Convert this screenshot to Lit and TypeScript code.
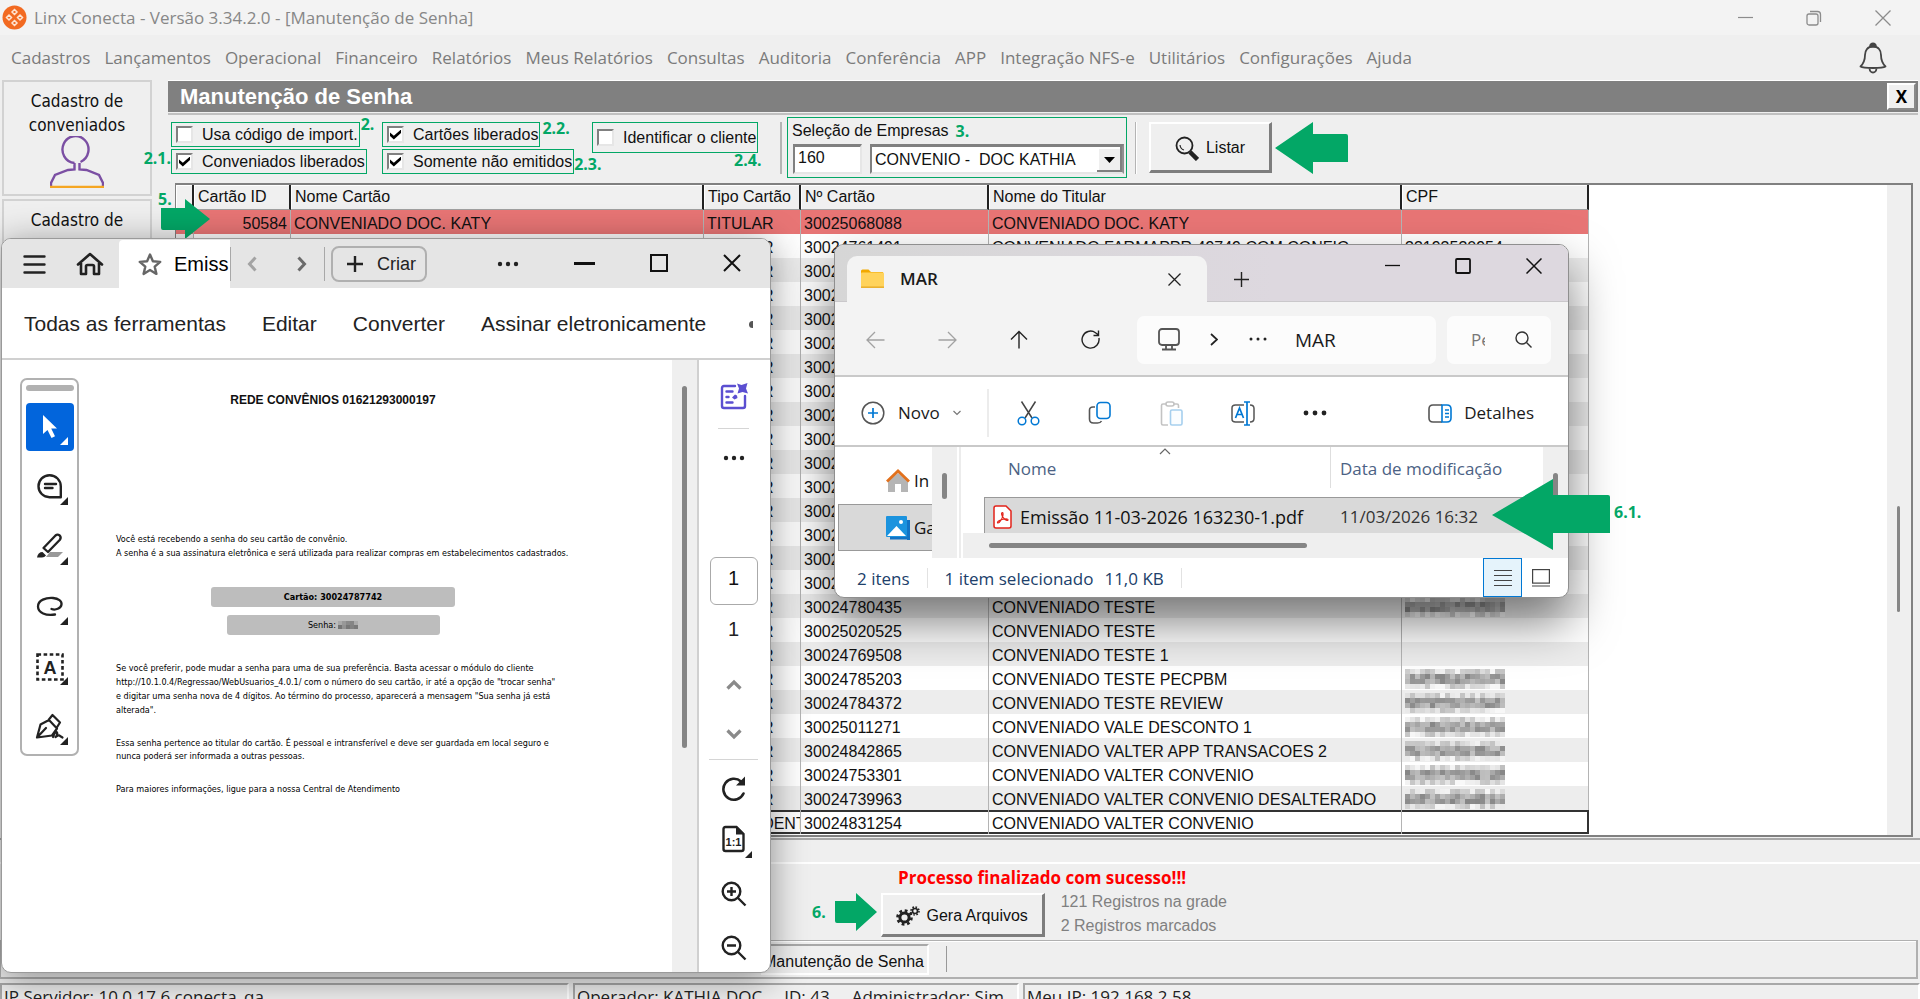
import { LitElement, html, css, svg, nothing } from "lit";
import { customElement } from "lit/decorators.js";

interface CardRow {
  id?: string;
  name?: string;
  kind: string;
  card: string;
  holder?: string;
  cpf?: string;
  masked?: boolean;
}

const hidden = (n: number): CardRow[] =>
  Array.from({ length: n }, () => ({ kind: "TITULAR", card: "30024" }));

const ROWS: CardRow[] = [
  { id: "50584", name: "CONVENIADO DOC. KATY", kind: "TITULAR", card: "30025068088", holder: "CONVENIADO DOC. KATY" },
  { kind: "TITULAR", card: "30024761491", holder: "CONVENIADO FARMAPPR 49749 COM CONFIG.", cpf: "33193530954" },
  ...hidden(14),
  { kind: "TITULAR", card: "30024780435", holder: "CONVENIADO TESTE", masked: true },
  { kind: "TITULAR", card: "30025020525", holder: "CONVENIADO TESTE" },
  { kind: "TITULAR", card: "30024769508", holder: "CONVENIADO TESTE 1" },
  { kind: "TITULAR", card: "30024785203", holder: "CONVENIADO TESTE PECPBM", masked: true },
  { kind: "TITULAR", card: "30024784372", holder: "CONVENIADO TESTE REVIEW", masked: true },
  { kind: "TITULAR", card: "30025011271", holder: "CONVENIADO VALE DESCONTO 1", masked: true },
  { kind: "TITULAR", card: "30024842865", holder: "CONVENIADO VALTER APP TRANSACOES 2", masked: true },
  { kind: "TITULAR", card: "30024753301", holder: "CONVENIADO VALTER CONVENIO", masked: true },
  { kind: "TITULAR", card: "30024739963", holder: "CONVENIADO VALTER CONVENIO DESALTERADO", masked: true },
  { kind: "DEPENDENTE", card: "30024831254", holder: "CONVENIADO VALTER CONVENIO" },
];

const MENU = [
  "Cadastros", "Lançamentos", "Operacional", "Financeiro", "Relatórios", "Meus Relatórios", "Consultas",
  "Auditoria", "Conferência", "APP", "Integração NFS-e", "Utilitários", "Configurações", "Ajuda",
];

/* Pixelated block that covers private numbers */
const mosaic = (seed: number, cols: number, rows: number, size: number, edge = 205) => {
  const cells = [];
  let s = seed * 7919 + 17;
  for (let y = 0; y < rows; y++) {
    for (let x = 0; x < cols; x++) {
      s = (s * 1103515245 + 12345) % 2147483648;
      const tone = y === 0 || y === rows - 1 ? edge : 150;
      const g = tone + Math.floor((s / 2147483648) * 60) - 15;
      cells.push(svg`<rect x=${x * size} y=${y * size} width=${size} height=${size} fill="rgb(${g},${g},${g})"/>`);
    }
  }
  return html`<svg width=${cols * size} height=${rows * size} shape-rendering="crispEdges" aria-hidden="true">${cells}</svg>`;
};

const base = css`
  *, *::before, *::after { box-sizing: border-box; }
  svg { display: block; flex: none; }
  button, input, select { font: inherit; color: inherit; margin: 0; padding: 0; border: 0; background: none; border-radius: 0; }
  button { display: flex; align-items: center; flex: none; cursor: pointer; }
  p, h1, h2 { margin: 0; font-size: inherit; }
`;

@customElement("pdf-window")
export class PdfWindow extends LitElement {
  static styles = [base, css`
    :host {
      display: flex; flex-direction: column; box-sizing: border-box; overflow: hidden;
      border: 1px solid #9a9a9a; border-radius: 10px; background: #fff; color: #222;
      box-shadow: 0 6px 36px rgba(0, 0, 0, .42);
      font-family: "Liberation Sans", Arial, sans-serif;
    }
    .head { display: flex; align-items: center; height: 49px; flex: none; background: #e5e5e5; padding-left: 20px; }
    .home { margin-left: 29px; }
    .tab { display: flex; align-items: center; gap: 11px; align-self: flex-end; height: 48px; width: 111px; margin-left: 15px; padding-left: 18px; background: #fff; overflow: hidden; border-radius: 4px 0 0 0; font-size: 20px; color: #000; }
    .sep { width: 1px; height: 34px; background: #a8a8a8; }
    .prev { margin-left: 16px; }
    .next { margin-left: 40px; margin-right: 17px; }
    .create { height: 36px; width: 96px; margin-left: 6px; padding-left: 14px; gap: 14px; border: 2px solid #b0b0b0; border-radius: 8px; font-size: 18px; }
    .dots { margin-left: 70px; }
    .win { margin-left: 55px; }
    .tools { display: flex; align-items: center; gap: 36px; height: 72px; flex: none; padding: 2px 0 0 22px; border-bottom: 2px solid #d0d0d0; font-size: 21px; white-space: nowrap; }
    .more { width: 4px; height: 7px; margin-left: 7px; border-radius: 4px 0 0 4px; background: #555; }
    .body { display: flex; flex: 1; min-height: 0; }
    .rail { display: flex; flex-direction: column; gap: 12px; align-self: flex-start; width: 59px; margin: 18px 0 0 18px; padding: 5px 3px 3px 3px; border: 2px solid #b1b1b1; border-radius: 7px; align-items: center; }
    .grip { width: 48px; height: 6px; border-radius: 3px; background: #b1b1b1; }
    .on { background: #0265dc; color: #fff; border-radius: 4px; }
    .page { width: 434px; margin-left: 37px; padding-top: 32px; white-space: nowrap; font: 9px/14px "DejaVu Sans Condensed", "Noto Sans", sans-serif; color: #000; }
    .page h1 { font: bold 12px/16px "Liberation Sans", Arial, sans-serif; text-align: center; color: #111; }
    .intro { padding-top: 124px; }
    .pill { display: flex; align-items: center; justify-content: center; gap: 2px; height: 20px; width: 244px; margin: 27px auto 0; border-radius: 3px; background: #bdbdbd; font-weight: bold; }
    .pill.small { width: 213px; margin-top: 8px; font-weight: normal; }
    .para { padding-top: 26px; }
    .para.two { padding-top: 20px; line-height: 13px; }
    .grow { flex: 1; }
    .track { width: 25px; background: #efefef; padding: 26px 10px 0; }
    .thumb { width: 5px; height: 362px; border-radius: 3px; background: #858585; }
    .side { display: flex; flex-direction: column; align-items: center; width: 73px; border-left: 2px solid #d0d0d0; padding: 23px 2px 0 0; color: #222; }
    .line { height: 1px; width: 49px; background: #d5d5d5; }
    .line.short { width: 31px; margin: 18px 0 26px; }
    .pageno { width: 48px; height: 48px; margin-top: 96px; border: 1px solid #aaa; border-radius: 6px; text-align: center; font-size: 20px; padding-bottom: 6px; color: #111; }
    .total { font-size: 20px; line-height: 24px; margin: 12px 0 38px; }
    .down { margin: 39px 0 19px; }
    .rot { margin: 14px 0 22px; }
    .z { margin-top: 23px; }
  `];

  private corner = svg`<path d="M42 34v8h-8z" fill="currentColor"/>`;

  render() {
    const c = this.corner;
    return html`
      <div class="head">
        <button aria-label="Menu"><svg width="25" height="24" stroke="#222" stroke-width="2.4" stroke-linecap="round"><path d="M2.500 4.500h20M2.500 12.500h20M2.500 20.500h20"/></svg></button>
        <button class="home" aria-label="Início"><svg width="28" height="26" fill="none" stroke="#222" stroke-width="2.6" stroke-linejoin="round" stroke-linecap="round"><path d="M2 13.500 14 3l12 10.500M5 12v11h5v-7.500q0-1.500 1.500-1.500h5q1.500 0 1.500 1.500V23h5V12"/></svg></button>
        <div class="tab"><svg width="26" height="26" fill="none" stroke="#666" stroke-width="2.4" stroke-linejoin="round"><path d="M13 3.500l2.900 6.800 7.300.6-5.500 4.800 1.700 7.200-6.400-3.900-6.400 3.900 1.700-7.200-5.500-4.800 7.300-.6z"/></svg><span>Emiss</span></div>
        <span class="sep"></span>
        <button class="prev" aria-label="Anterior"><svg width="10" height="16" fill="none" stroke="#a3a3a3" stroke-width="3"><path d="M8.500 1.500 2.500 8l6 6.500"/></svg></button>
        <button class="next" aria-label="Próximo"><svg width="10" height="16" fill="none" stroke="#6b6b6b" stroke-width="3"><path d="M1.500 1.500 7.500 8l-6 6.500"/></svg></button>
        <span class="sep"></span>
        <button class="create"><svg width="16" height="16" stroke="#222" stroke-width="2.400"><path d="M8 0v16M0 8h16"/></svg><span>Criar</span></button>
        <button class="dots" aria-label="Mais"><svg width="22" height="6" fill="#222"><circle cx="3" cy="3" r="2.200"/><circle cx="11" cy="3" r="2.200"/><circle cx="19" cy="3" r="2.200"/></svg></button>
        <button class="win" aria-label="Minimizar"><svg width="21" height="18"><path d="M0 8.500h21" stroke="#111" stroke-width="3"/></svg></button>
        <button class="win" aria-label="Maximizar"><svg width="18" height="20"><rect x="1" y="1" width="16" height="16" fill="none" stroke="#111" stroke-width="2"/></svg></button>
        <button class="win" aria-label="Fechar"><svg width="18" height="20"><path d="M1 1l16 16M17 1 1 17" stroke="#111" stroke-width="2"/></svg></button>
      </div>
      <div class="tools">
        <button>Todas as ferramentas</button><button>Editar</button><button>Converter</button><button>Assinar eletronicamente</button><span class="more"></span>
      </div>
      <div class="body">
        <div class="rail">
          <span class="grip"></span>
          <button class="on" aria-label="Selecionar"><svg width="48" height="48"><path d="M17 12v19l4.500-4 4 8 3.500-1.700-3.800-7.800H31z" fill="#fff"/>${c}</svg></button>
          <button aria-label="Comentar"><svg width="48" height="48" fill="none" stroke="#222" stroke-width="2.400" stroke-linecap="round"><path d="M23.500 12.200a11 11 0 1 0 0 22H34.800V23.500A11.200 11.200 0 0 0 23.500 12.200z" stroke-linejoin="round"/><path d="M19 21h11M19 25h7.500"/><path d="M42 34v8h-8z" fill="#222" stroke="none"/></svg></button>
          <button aria-label="Realçar"><svg width="48" height="48"><path d="M24 29h13l-5 5H20z" fill="#999"/><path d="M11 34.500q1-5.500 5.500-5.500l3.500 3.500q-1.500 2-4 2z" fill="#222"/><path d="M17.500 25 29.500 12.500q2-1.700 4.200 0 1.800 2 .2 4.200L22 29z" fill="none" stroke="#222" stroke-width="2.300" stroke-linejoin="round"/>${c}</svg></button>
          <button aria-label="Desenhar"><svg width="48" height="48" fill="none" stroke="#222" stroke-width="2.300" stroke-linecap="round"><path d="M29 31.500c-9 1.500-17-1.500-17-8C12 17 20 14.500 27 15c5.500.5 9 3 8.500 6.500-.6 4-6 6-10 4.500"/><path d="M42 34v8h-8z" fill="#222" stroke="none"/></svg></button>
          <button aria-label="Caixa de texto"><svg width="48" height="48"><rect x="11.500" y="11.500" width="25" height="25" fill="none" stroke="#222" stroke-width="2.600" stroke-dasharray="3.600 2.500"/><text x="24" y="30.500" text-anchor="middle" font-size="18" font-weight="bold" fill="#222">A</text>${c}</svg></button>
          <button aria-label="Assinar"><svg width="48" height="48" fill="none" stroke="#222" stroke-width="2.200" stroke-linejoin="round" stroke-linecap="round"><path d="M11 34.500l3.500-13 8.500-4.500 8 8.500-5 7zM22.500 17l4-5 7.500 7.500-3.500 5.500M11.500 34l8.500-9"/><path d="M27 34q3-7 4-4.500t-1.500 4.500q3.500-2.500 4.500-1l2.500 1.500"/><path d="M42 34v8h-8z" fill="#222" stroke="none"/></svg></button>
        </div>
        <div class="page">
          <h1>REDE CONVÊNIOS 01621293000197</h1>
          <p class="intro">Você está recebendo a senha do seu cartão de convênio.<br>A senha é a sua assinatura eletrônica e será utilizada para realizar compras em estabelecimentos cadastrados.</p>
          <div class="pill">Cartão: 30024787742</div>
          <div class="pill small">Senha: ${mosaic(4, 5, 2, 4, 130)}</div>
          <p class="para">Se você preferir, pode mudar a senha para uma de sua preferência. Basta acessar o módulo do cliente<br>http://10.1.0.4/Regressao/WebUsuarios_4.0.1/ com o número do seu cartão, ir até a opção de "trocar senha"<br>e digitar uma senha nova de 4 dígitos. Ao término do processo, aparecerá a mensagem "Sua senha já está<br>alterada".</p>
          <p class="para two">Essa senha pertence ao titular do cartão. É pessoal e intransferível e deve ser guardada em local seguro e<br>nunca poderá ser informada a outras pessoas.</p>
          <p class="para two">Para maiores informações, ligue para a nossa Central de Atendimento</p>
        </div>
        <span class="grow"></span>
        <div class="track"><div class="thumb"></div></div>
        <div class="side">
          <button aria-label="Assistente"><svg width="28" height="27" fill="none" stroke="#5b4fd1" stroke-width="2.400" stroke-linecap="round"><path d="M15 3H4Q2 3 2 5v18q0 2 2 2h19q2 0 2-2V13" /><path d="M6.500 8.500h6M6.500 14h2M6.500 19.500h6"/><path d="M17 .5l4.500 1.500L27.500 0 26 5.500l2 5-5.500-1.500-5 1.500 1.500-5zM15 11.500l2 1 .5 2.500-3 1.500-2.500-2z" fill="#5b4fd1" stroke="none"/></svg></button>
          <span class="line short"></span>
          <button aria-label="Mais"><svg width="22" height="6" fill="#222"><circle cx="3" cy="3" r="2.200"/><circle cx="11" cy="3" r="2.200"/><circle cx="19" cy="3" r="2.200"/></svg></button>
          <input class="pageno" aria-label="Página" value="1">
          <span class="total">1</span>
          <button aria-label="Página anterior"><svg width="16" height="11" fill="none" stroke="#8a8a8a" stroke-width="3.200"><path d="M1.500 9.500 8 3l6.500 6.500"/></svg></button>
          <button class="down" aria-label="Próxima página"><svg width="16" height="11" fill="none" stroke="#8a8a8a" stroke-width="3.200"><path d="M1.500 1.500 8 8l6.500-6.500"/></svg></button>
          <span class="line"></span>
          <button class="rot" aria-label="Girar"><svg width="26" height="28" fill="none" stroke="#222" stroke-width="2.600"><path d="M22.500 19.500A10.500 10.500 0 1 1 20 7.500" stroke-linecap="round"/><path d="M24 2.500v9h-9z" fill="#222" stroke="none"/></svg></button>
          <button aria-label="Tamanho real"><svg width="36" height="34"><path d="M9.500 3h11l7 7v15q0 2-2 2h-16q-2 0-2-2V5q0-2 2-2z" fill="none" stroke="#222" stroke-width="2.400"/><path d="M20 3v7.500h7.500z" fill="#222"/><text x="17.500" y="22" text-anchor="middle" font-size="11" font-weight="bold" fill="#222">1:1</text><path d="M36 27v7h-7z" fill="#222"/></svg></button>
          <button class="z" aria-label="Ampliar"><svg width="26" height="26" fill="none" stroke="#222" stroke-width="2.400"><circle cx="10.500" cy="10.500" r="8.800"/><path d="M17 17l7.500 7.500M6 10.500h9M10.500 6v9"/></svg></button>
          <button class="z" aria-label="Reduzir"><svg width="26" height="32" fill="none" stroke="#222" stroke-width="2.400"><circle cx="10.500" cy="15.500" r="8.800"/><path d="M17 22l7.500 7.500M6 15.500h9"/></svg></button>
        </div>
      </div>`;
  }
}

@customElement("explorer-window")
export class ExplorerWindow extends LitElement {
  static styles = [base, css`
    :host {
      display: flex; flex-direction: column; box-sizing: border-box; overflow: hidden;
      border: 1px solid #8f8f8f; border-radius: 10px; background: #fff; color: #1b1b1b;
      box-shadow: 0 24px 48px rgba(0, 0, 0, .5);
      font: 17px/24px "Open Sans", "Noto Sans", sans-serif;
    }
    .strip { display: flex; height: 57px; flex: none; padding: 11px 0 0 12px; background: linear-gradient(#cac8cb, #cac8cb) bottom / 100% 1px no-repeat, linear-gradient(90deg, #d6d6d6, #ddd8df 60%); }
    .tab { display: flex; align-items: center; width: 360px; padding: 0 26px 0 14px; border-radius: 10px 10px 0 0; background: #f3f3f3; font-weight: 600; }
    .tab span { flex: 1; padding-left: 16px; }
    .plus { margin: 0 0 0 27px; height: 46px; }
    .wins { display: flex; gap: 55px; margin-left: auto; padding-right: 26px; height: 20px; align-items: center; }
    .nav { display: flex; align-items: center; height: 75px; flex: none; padding: 2px 17px 0 31px; background: #f3f3f3; border-bottom: 2px solid #c9c9c9; }
    .arrows { display: flex; gap: 53px; }
    .addr { display: flex; align-items: center; flex: 1; height: 48px; margin: 0 11px 0 37px; padding-left: 21px; border-radius: 7px; background: #fcfcfc; font-size: 19px; }
    .addr .gt { margin: 0 31px 0 30px; }
    .addr span { padding-left: 28px; }
    .search { display: flex; align-items: center; width: 104px; height: 48px; padding-left: 24px; gap: 30px; border-radius: 7px; background: #fcfcfc; }
    .search input { width: 14px; color: #777; overflow: hidden; }
    .cmds { display: flex; align-items: center; height: 70px; flex: none; padding: 4px 34px 0 26px; border-bottom: 2px solid #c9c9c9; }
    .new { gap: 13px; }
    .vsep { width: 2px; height: 48px; margin: 0 28px 0 26px; background: #ececec; }
    .icons { display: flex; align-items: center; gap: 48px; }
    .det { margin-left: auto; gap: 12px; }
    .content { display: flex; height: 111px; flex: none; }
    .tree { width: 97px; padding: 10px 0 0 3px; }
    .node { display: flex; align-items: center; gap: 4px; width: 94px; height: 47px; padding-left: 47px; overflow: hidden; border: 1px solid transparent; border-right: 0; color: #111; }
    .node.sel { background: #d9d9d9; border-color: #999; }
    .vs { width: 25px; background: #efefef; padding: 26px 10px 0; }
    .vt { width: 5px; height: 26px; border-radius: 3px; background: #858585; }
    .div { width: 2px; margin: 0 2px; background: #ececec; }
    .list { position: relative; display: flex; flex-direction: column; flex: 1; }
    table { width: 559px; margin-left: 21px; border-collapse: separate; border-spacing: 0; table-layout: fixed; flex: 1; }
    th, td { padding: 0; text-align: left; white-space: nowrap; font-weight: 400; }
    .name { width: 346px; }
    th { height: 50px; padding: 0 0 6px 24px; color: #4c6284; }
    th + th { padding-left: 10px; background: linear-gradient(#dedede, #dedede) 0 0 / 1px 41px no-repeat; }
    td { height: 36px; padding-top: 3px; background: #d9d9d9; border-top: 1px solid #999; color: #111; }
    td:first-child { border-left: 1px solid #999; }
    td + td { padding-left: 10px; color: #333; }
    .file { display: flex; align-items: center; gap: 8px; padding-left: 8px; font-size: 18px; }
    .caret { position: absolute; left: 196px; top: 0; }
    .hs { height: 25px; background: #efefef; padding: 10px 26px 0; }
    .ht { width: 318px; height: 5px; border-radius: 3px; background: #858585; }
    .status { display: flex; align-items: center; flex: 1; padding: 0 18px 0 22px; color: #20406a; }
    .status span { padding-top: 2px; }
    .status .ssep { width: 1px; height: 20px; margin: 0 17px; background: #e2e2e2; }
    .size { margin-left: 11px; }
    .view { justify-content: center; width: 39px; height: 39px; }
    .view.act { margin-left: auto; border: 1px solid #0078d4; background: #e5f3fb; }
    .view + .view { width: 18px; margin-left: 10px; }
  `];

  render() {
    return html`
      <div class="strip">
        <div class="tab">
          <svg width="23" height="20"><path d="M0 2q0-1.500 1.500-1.500h6L10 3h12v4H0z" fill="#f2a900"/><rect y="3.500" width="23" height="15" rx="1" fill="#ffd35c"/><path d="M0 18.200h23" stroke="#e9ae2a" stroke-width="1.500"/></svg>
          <span>MAR</span>
          <button aria-label="Fechar guia"><svg width="13" height="13" stroke="#222" stroke-width="1.300"><path d="M.5.5l12 12M12.500.5l-12 12"/></svg></button>
        </div>
        <button class="plus" aria-label="Nova guia"><svg width="15" height="15" stroke="#222" stroke-width="1.400"><path d="M7.500 0v15M0 7.500h15"/></svg></button>
        <div class="wins">
          <button aria-label="Minimizar"><svg width="15" height="16" stroke="#111" stroke-width="1.300"><path d="M0 7.500h15"/></svg></button>
          <button aria-label="Maximizar"><svg width="16" height="16" fill="none" stroke="#111" stroke-width="1.800"><rect x="1" y="1" width="14" height="14" rx="1"/></svg></button>
          <button aria-label="Fechar"><svg width="16" height="16" stroke="#111" stroke-width="1.500"><path d="M.5.5l15 15M15.500.5l-15 15"/></svg></button>
        </div>
      </div>
      <div class="nav">
        <div class="arrows">
          <button aria-label="Voltar"><svg width="19" height="18" fill="none" stroke="#a2a2a2" stroke-width="1.300"><path d="M18.500 9H1.500M9 1 1 9l8 8"/></svg></button>
          <button aria-label="Avançar"><svg width="19" height="18" fill="none" stroke="#a2a2a2" stroke-width="1.300"><path d="M.5 9h17M10 1l8 8-8 8"/></svg></button>
          <button aria-label="Acima"><svg width="18" height="19" fill="none" stroke="#222" stroke-width="1.400"><path d="M9 18.500v-17M1 9.500l8-8 8 8"/></svg></button>
          <button aria-label="Atualizar"><svg width="19" height="19" fill="none" stroke="#222" stroke-width="1.400"><path d="M17.900 8A8.500 8.500 0 1 1 14.500 2.700L17.500 5M17.500.5V5.500H12.500"/></svg></button>
        </div>
        <div class="addr">
          <svg width="22" height="23" fill="none" stroke="#555" stroke-width="1.800"><rect x="1" y="1" width="20" height="16" rx="3"/><path d="M8 17v4M14 17v4M4 21.500h14"/></svg>
          <svg class="gt" width="8" height="13" fill="none" stroke="#222" stroke-width="1.700"><path d="M1 1l6 5.500L1 12"/></svg>
          <svg width="18" height="6" fill="#222"><circle cx="2" cy="2" r="1.500"/><circle cx="9" cy="2" r="1.500"/><circle cx="16" cy="2" r="1.500"/></svg>
          <span>MAR</span>
        </div>
        <label class="search"><input aria-label="Pesquisar" value="Pe"><svg width="17" height="17" fill="none" stroke="#333" stroke-width="1.400"><circle cx="7" cy="7" r="6"/><path d="M11.500 11.500l5 5"/></svg></label>
      </div>
      <div class="cmds">
        <button class="new"><svg width="24" height="24" fill="none" stroke-width="1.500"><circle cx="12" cy="12" r="10.800" stroke="#555"/><path d="M12 7v10M7 12h10" stroke="#0078d4" stroke-width="1.700"/></svg><span>Novo</span><svg width="8" height="6" fill="none" stroke="#777" stroke-width="1.200"><path d="M.5 1 4 4.500 7.500 1"/></svg></button>
        <span class="vsep"></span>
        <div class="icons">
          <button aria-label="Recortar"><svg width="23" height="25" fill="none" stroke="#444" stroke-width="1.500"><path d="M4.500.5 15 17M18.500.5 8 17"/><circle cx="5" cy="20" r="3.800" stroke="#0078d4"/><circle cx="18" cy="20" r="3.800" stroke="#0078d4"/></svg></button>
          <button aria-label="Copiar"><svg width="24" height="24" fill="none" stroke-width="1.600"><path d="M7 6H5Q1.500 6 1.500 9v9q0 4 4 4h4q3 0 4-2" stroke="#555"/><rect x="9" y="1.500" width="13" height="16" rx="3.500" stroke="#0078d4" fill="#fafdff"/></svg></button>
          <button aria-label="Colar"><svg width="23" height="25" fill="none" stroke="#c3c3c3" stroke-width="1.600"><path d="M6 3H3Q1.500 3 1.500 4.500v18q0 1.500 1.500 1.500h5M14 3h3q1.500 0 1.500 1.500V7"/><rect x="6" y="1" width="8" height="4" rx="2"/><rect x="10.500" y="9" width="11.500" height="15" rx="1.500" stroke="#a6cfee" fill="#fafdff"/></svg></button>
          <button aria-label="Renomear"><svg width="24" height="25" fill="none" stroke="#555" stroke-width="1.500"><path d="M13 4H4.500Q1 4 1 7v11q0 3 3.500 3H13M19 4q4 0 4 3.500v10q0 3.500-4 3.500"/><path d="M13 1h6M16 1v23M13 24h6M4.500 17 8.500 7l4 10M6 13.500h5.500" stroke="#0078d4" stroke-width="1.700"/></svg></button>
          <button aria-label="Mais"><svg width="24" height="6" fill="#222"><circle cx="3" cy="3" r="2.400"/><circle cx="12" cy="3" r="2.400"/><circle cx="21" cy="3" r="2.400"/></svg></button>
        </div>
        <button class="det"><svg width="24" height="19" fill="none" stroke-width="1.600"><path d="M14 1H5Q1 1 1 5v9q0 4 4 4h9" stroke="#555"/><path d="M14 1h5q4 0 4 4v9q0 4-4 4h-5zM17 6h4M17 9.500h4M17 13h4" stroke="#0078d4"/></svg><span>Detalhes</span></button>
      </div>
      <div class="content">
        <div class="tree">
          <div class="node"><svg width="24" height="24"><path d="M2 12 12 4l10 8v11h-7v-8H9v8H2z" fill="#b5b5b5"/><path d="M1 12.500 12 2l11 10.500" fill="none" stroke="#e2711d" stroke-width="2.800"/></svg><span>In</span></div>
          <div class="node sel"><svg width="24" height="24"><path d="M4 4h20v20H4z" fill="#1273c4"/><rect width="21" height="21" rx="1" fill="#1b93de"/><path d="M21 24H3" stroke="#d9d9d9"/><path d="M1 20 10.500 10 20 20z" fill="#fff"/><circle cx="15" cy="6" r="2" fill="#fff"/></svg><span>Ga</span></div>
        </div>
        <div class="vs"><div class="vt"></div></div>
        <span class="div"></span>
        <div class="list">
          <table>
            <thead><tr><th class="name">Nome</th><th>Data de modificação</th></tr></thead>
            <tbody><tr>
              <td><div class="file"><svg width="19" height="24" fill="#fff" stroke="#e2231a" stroke-width="1.500"><path d="M3 1h10l5 5v15q0 2-2 2H3q-2 0-2-2V3q0-2 2-2z"/><path d="M9.500 7.500c-1.800 0-.6 3.500 1 5.500 1.700 1.800 4.500 3.500 4.500 1.800 0-1.500-5.500-.8-8.500.7-2 1-2.500 2.300-1.500 2.500 1.700.2 4.500-5 4.900-7.500.2-1.500.2-3-.4-3z" fill="none" stroke-width="1.200"/></svg><span>Emissão 11-03-2026 163230-1.pdf</span></div></td>
              <td>11/03/2026 16:32</td>
            </tr></tbody>
          </table>
          <svg class="caret" width="12" height="9" fill="none" stroke="#666" stroke-width="1.200"><path d="M1 7l5-5 5 5"/></svg>
          <div class="hs"><div class="ht"></div></div>
        </div>
        <div class="vs"><div class="vt"></div></div>
      </div>
      <div class="status">
        <span>2 itens</span><span class="ssep"></span><span>1 item selecionado</span><span class="size">11,0 KB</span><span class="ssep"></span>
        <button class="view act" aria-label="Lista"><svg width="18" height="18" stroke="#444" stroke-width="1"><path d="M0 1.500h18M0 6.500h18M0 11.500h18M0 16.500h18"/></svg></button>
        <button class="view" aria-label="Miniaturas"><svg width="18" height="18" fill="none" stroke="#444" stroke-width="1.200"><rect x=".6" y=".6" width="16.800" height="13.500"/><path d="M0 17h18"/></svg></button>
      </div>`;
  }
}

@customElement("app-root")
export class AppRoot extends LitElement {
  static styles = [base, css`
    :host {
      display: flex; flex-direction: column; position: relative; height: 100vh; overflow: hidden;
      background: #efefef; color: #111; font: 16px/20px "Liberation Sans", Arial, sans-serif;
    }
    .title { display: flex; align-items: center; height: 35px; flex: none; gap: 7px; padding: 0 29px 0 2px; background: #f3f3f3; font: 17px/24px "Open Sans", "Noto Sans", sans-serif; color: #878787; }
    .title h1 { flex: 1; font-weight: 400; }
    .title button { margin-left: 46px; }
    .menu { display: flex; align-items: center; height: 45px; flex: none; gap: 14px; padding: 0 33px 0 11px; font: 17px/24px "Open Sans", "Noto Sans", sans-serif; color: #7b7b7b; white-space: nowrap; }
    .bell { margin-left: auto; }
    .work { display: flex; flex: 1; min-height: 0; gap: 16px; padding-right: 2px; }
    .sidebar { display: flex; flex-direction: column; gap: 3px; width: 152px; padding-left: 2px; flex: none; }
    .card { flex-direction: column; height: 116px; border: 2px solid #d2d2d2; padding-top: 7px; font: 17px/24px "DejaVu Sans Condensed", "Noto Sans", sans-serif; text-align: center; justify-content: flex-start; }
    .card svg { margin-top: -1px; }
    .form { display: flex; flex-direction: column; flex: 1; min-width: 0; }
    .bar { display: flex; align-items: center; justify-content: space-between; height: 32px; flex: none; padding: 0 2px 0 12px; border-top: 1px solid #fff; background: #808080; color: #fff; }
    .bar h2 { font-size: 22px; }
    .x { justify-content: center; width: 29px; height: 27px; background: #f0f0f0; border: 2px solid; border-color: #fff #8a8a8a #8a8a8a #fff; color: #000; font: bold 17px "Noto Sans", sans-serif; }
    .filters { display: grid; grid-template-columns: 211px 210px 190px auto auto 1fr; height: 70px; flex: none; padding: 7px 0 0 3px; border-top: 2px solid #c0c0c0; margin-top: 1px; align-items: start; }
    .col { display: flex; flex-direction: column; align-items: flex-start; gap: 2px; }
    .chk { position: relative; display: flex; align-items: center; gap: 9px; height: 25px; padding: 0 1px 0 4px; border: 1px solid #03a766; white-space: nowrap; }
    .tall { height: 31px; }
    .chk input { appearance: none; display: grid; place-items: center; width: 17px; height: 17px; background: #fff; border: 2px solid; border-color: #808080 #e6e6e6 #e6e6e6 #808080; }
    .chk input:checked::before { content: ""; width: 11px; height: 10px; background: #000; clip-path: polygon(0 30%, 35% 62%, 100% 0, 100% 34%, 35% 100%, 0 66%); }
    .tag { color: #03a766; font: bold 16px/16px "Noto Sans", sans-serif; }
    .chk .tag { position: absolute; left: 100%; margin-left: 2px; top: -7px; }
    .chk .tag.high { top: -3px; margin-left: 3px; }
    .chk .tag.left { left: auto; right: 100%; margin-right: 1px; top: 0; }
    .chk .tag.mid { top: 6px; margin-left: 1px; }
    .chk .tag.under { left: auto; right: -4px; top: 29px; }
    .sel { height: 61px; width: 340px; margin-left: 5px; margin-top: -5px; padding: 3px 2px 0 4px; border: 1px solid #03a766; }
    .sel label { display: flex; gap: 7px; align-items: center; }
    .pair { display: flex; gap: 8px; margin: 3px 0 0 1px; }
    .pair input { width: 69px; height: 30px; padding: 0 0 3px 3px; background: #fff; border: 2px solid; border-color: #808080 #e6e6e6 #e6e6e6 #808080; border-width: 3px 2px 2px 2px; }
    .combo { position: relative; flex: 1; }
    .combo select { appearance: none; width: 100%; height: 30px; padding-left: 3px; background: #fff; border: 2px solid; border-color: #808080 #909090 #e6e6e6 #808080; border-width: 3px 2px 2px 2px; }
    .combo svg { position: absolute; right: 2px; top: 3px; pointer-events: none; }
    .split { width: 2px; height: 52px; background: #b4b4b4; border-right: 1px solid #fff; }
    .filters .col:nth-child(3) { border-right: 2px solid #b4b4b4; height: 52px; }
    .act { display: flex; gap: 12px; margin-left: 8px; }
    .btn { gap: 7px; border: 2px solid; border-color: #fff #7d7d7d #7d7d7d #fff; border-right-width: 3px; border-bottom-width: 3px; background: #efefef; color: #111; justify-content: center; }
    .listar { width: 123px; height: 51px; padding-top: 2px; margin-right: 1px; }
    .gridbox { display: flex; flex: 1; min-height: 0; margin: 0 5px 1px 7px; border: 1px solid #808080; border-top-width: 2px; border-right-width: 2px; border-bottom-width: 2px; background: #fff; justify-content: space-between; overflow: hidden; }
    table { width: 1413px; flex: none; table-layout: fixed; border-collapse: separate; border-spacing: 0; align-self: flex-start; }
    th, td { padding: 0 3px; text-align: left; font-weight: 400; white-space: nowrap; overflow: hidden; }
    th { height: 25px; padding: 0 4px; background: #f0f0f0; border-right: 2px solid #222; border-bottom: 1px solid #a0a0a0; box-shadow: inset 1px 1px #fff; }
    td { height: 24px; padding-top: 4px; border-right: 1px solid #b4b4b4; }
    td svg { margin: -1px 0 1px; }
    tbody tr:nth-child(odd) { background: #ededed; }
    tbody tr:nth-child(1) { background: #e87575; }
    tbody tr:nth-child(n+2) td:first-child { background: #f0f0f0; }
    tbody tr:last-child td { background: #fff; box-shadow: inset 0 2px #333, inset 0 -2px #333; }
    tbody tr:last-child td:last-child { border-right: 2px solid #333; }
    .c0 { width: 18px; } .c1 { width: 97px; } .c2 { width: 413px; } .c3 { width: 97px; } .c4 { width: 188px; } .c5 { width: 413px; } .c6 { width: 187px; }
    .num { text-align: right; }
    .track { width: 24px; background: #efefef; padding: 321px 0 0 10px; flex: none; }
    .thumb { width: 3px; height: 106px; border-radius: 2px; background: #868686; }
    .foot { display: flex; flex-direction: column; height: 102px; flex: none; border-top: 2px solid #a8a8a8; padding: 22px 0 0 812px; }
    .foot::before { content: ""; height: 2px; margin: 0 0 4px -812px; background: #fff; flex: none; }
    .done { padding-left: 86px; color: #f00; font: bold 17px/20px "Open Sans", "Noto Sans", sans-serif; }
    .gen { display: flex; align-items: center; margin-top: 4px; }
    .gen .btn { width: 164px; height: 44px; margin: 0 16px 0 4px; gap: 6px; padding-top: 2px; }
    .count { color: #808080; line-height: 24px; margin-top: -2px; white-space: nowrap; }
    .lead { display: flex; align-items: center; gap: 9px; padding-bottom: 6px; }
    .tasks { display: flex; align-items: center; height: 39px; flex: none; margin-right: 2px; border: 2px solid #b0b0b0; border-width: 1px 2px 2px 1px; box-shadow: inset 0 1px #fff; }
    .task { height: 31px; margin-left: 760px; padding: 6px 3px 0 2px; border: 2px solid; border-color: #a8a8a8 #fff #fff #a8a8a8; border-left: 0; }
    .tsep { width: 1px; height: 26px; margin-left: 17px; background: #999; }
    .status { display: flex; gap: 4px; height: 16px; margin-top: 4px; flex: none; overflow: hidden; font: 17px/24px "Open Sans", "Noto Sans", sans-serif; color: #222; white-space: pre; }
    .panel { height: 30px; flex: none; padding: 0 0 0 2px; border: 2px solid #a8a8a8; border-bottom: 0; border-right-color: #fff; display: flex; gap: 22px; }
    .p1 { width: 569px; } .p2 { width: 446px; } .p3 { flex: 1; }
    pdf-window { position: absolute; left: 1px; top: 238px; width: 770px; height: 735px; }
    explorer-window { position: absolute; left: 834px; top: 244px; width: 735px; height: 354px; }
    .row-mark { position: absolute; left: 158px; top: 191px; }
    .row-mark svg { margin-left: 3px; }
    .row-mark .tag { display: block; height: 8px; }
    .file-mark { position: absolute; left: 1492px; top: 479px; display: flex; gap: 4px; align-items: center; }
    .file-mark .tag { margin-top: -6px; }
  `];

  private check(text: string, on: boolean, tag: string, cls = "", tall = "") {
    return html`<label class="chk ${tall}"><input type="checkbox" .checked=${on}><span>${text}</span><b class="tag ${cls}">${tag}</b></label>`;
  }

  private arrow(w: number, h: number, d: string) {
    return html`<svg width=${w} height=${h} fill="#03a766" aria-hidden="true"><path d=${d}/></svg>`;
  }

  render() {
    return html`
      <header class="title">
        <svg width="25" height="25"><circle cx="12.500" cy="12.500" r="12" fill="#f26a21"/><g fill="none" stroke="#ffe3d0" stroke-width="1.500"><path d="M12.500 4.500 15 7l-2.500 2.500L10 7zM12.500 15.500 15 18l-2.500 2.500L10 18zM7 10l2.500 2.500L7 15l-2.500-2.500zM18 10l2.500 2.500L18 15l-2.500-2.500z"/></g></svg>
        <h1>Linx Conecta - Versão 3.34.2.0 - [Manutenção de Senha]</h1>
        <button aria-label="Minimizar"><svg width="15" height="16" stroke="#8c8c8c" stroke-width="1.200"><path d="M0 7.500h15"/></svg></button>
        <button aria-label="Restaurar"><svg width="16" height="16" fill="none" stroke="#8c8c8c" stroke-width="1.300"><rect x="1" y="4" width="11" height="11" rx="2"/><path d="M4 1.500h7.500q3 0 3 3V12"/></svg></button>
        <button aria-label="Fechar"><svg width="16" height="16" stroke="#8c8c8c" stroke-width="1.300"><path d="M.5.500l15 15M15.500.500l-15 15"/></svg></button>
      </header>
      <nav class="menu">
        ${MENU.map((m) => html`<button>${m}</button>`)}
        <button class="bell" aria-label="Notificações"><svg width="28" height="32" fill="none" stroke="#444" stroke-width="1.800" stroke-linejoin="round"><path d="M14 4.500c-5.500 0-8 4-8 8.500 0 6-1.500 8.500-4.500 11.500 3 2 22 2 25 0-3-3-4.500-5.500-4.500-11.500 0-4.500-2.500-8.500-8-8.500z"/><path d="M11 4.500q.5-3 3-3t3 3z" fill="#444"/><path d="M10.500 26.500q.5 4 3.500 4t3.500-4"/></svg></button>
      </nav>
      <main class="work">
        <aside class="sidebar">
          <button class="card"><span>Cadastro de<br>conveniados</span><svg width="54" height="52" fill="none" stroke="#7b4fa3" stroke-width="2.400"><path d="M24.500 27v6.500L18 34 5 39l-4 8v3.500M29.500 27v6.500l7 .5L49 39l4 8v3.500M24.500 27a13 13.500 0 1 1 6-1"/><path d="M0 51h54" stroke="#f5a623"/></svg></button>
          <button class="card"><span>Cadastro de</span></button>
        </aside>
        <section class="form">
          <div class="bar"><h2>Manutenção de Senha</h2><button class="x" aria-label="Fechar">X</button></div>
          <div class="filters">
            <div class="col">${this.check("Usa código de import.", false, "2.")}${this.check("Conveniados liberados", true, "2.1.", "left")}</div>
            <div class="col">${this.check("Cartões liberados", true, "2.2.", "high")}${this.check("Somente não emitidos", true, "2.3.", "mid")}</div>
            <div class="col">${this.check("Identificar o cliente", false, "2.4.", "under", "tall")}</div>
            <div class="sel">
              <label for="emp">Seleção de Empresas <b class="tag">3.</b></label>
              <div class="pair"><input id="emp" value="160"><div class="combo"><select aria-label="Empresa"><option>CONVENIO -${"\u00a0\u00a0"}DOC KATHIA</option></select><svg width="25" height="25"><path d="M0 0h25v25H0z" fill="#efefef"/><path d="M1 24V1h23" fill="none" stroke="#fff" stroke-width="2"/><path d="M24 0v24H0" fill="none" stroke="#808080" stroke-width="2"/><path d="M7 10h11l-5.500 6z"/></svg></div></div>
            </div>
            <div class="act">
              <span class="split"></span>
              <button class="btn listar"><svg width="24" height="25" fill="none" stroke="#222"><circle cx="9.500" cy="9.500" r="8" stroke-width="1.800"/><path d="M5 9q.5 4 4 5" stroke-width="1.200"/><path d="M15 16l7.500 7.500" stroke-width="4.500"/></svg>Listar</button>
            </div>
            <div>${this.arrow(75, 52, "M2 26 40 0v12h33q2 0 2 2v26H40v12z")}</div>
          </div>
          <div class="gridbox">
            <table>
              <thead><tr><th class="c0"></th><th class="c1">Cartão ID</th><th class="c2">Nome Cartão</th><th class="c3">Tipo Cartão</th><th class="c4">Nº Cartão</th><th class="c5">Nome do Titular</th><th class="c6">CPF</th></tr></thead>
              <tbody>${ROWS.map((r, i) => html`<tr><td></td><td class="num">${r.id ?? nothing}</td><td>${r.name ?? nothing}</td><td>${r.kind}</td><td>${r.card}</td><td>${r.holder ?? nothing}</td><td>${r.masked ? mosaic(i, 20, 4, 5) : r.cpf ?? nothing}</td></tr>`)}</tbody>
            </table>
            <div class="track"><div class="thumb"></div></div>
          </div>
        </section>
      </main>
      <section class="foot">
        <p class="done">Processo finalizado com sucesso!!!</p>
        <div class="gen">
          <div class="lead"><b class="tag">6.</b>${this.arrow(42, 38, "M0 8h21V0l21 19-21 19v-8H2q-2 0-2-2z")}</div>
          <button class="btn"><svg width="24" height="20" fill="none" stroke="#222"><circle cx="8.500" cy="11.500" r="4.600" stroke-width="3"/><circle cx="8.500" cy="11.500" r="7" stroke-width="2.600" stroke-dasharray="2.800 2.700"/><circle cx="19" cy="5" r="2.500" stroke-width="1.600"/><circle cx="19" cy="5" r="4" stroke-width="1.600" stroke-dasharray="1.600 1.540"/></svg>Gera Arquivos</button>
          <p class="count">121 Registros na grade<br>2 Registros marcados</p>
        </div>
      </section>
      <div class="tasks"><button class="task">Manutenção de Senha</button><span class="tsep"></span></div>
      <footer class="status">
        <div class="panel p1">IP Servidor: 10.0.17.6 conecta_qa</div>
        <div class="panel p2"><span>Operador: KATHIA DOC</span><span>ID: 43</span><span>Administrador: Sim</span></div>
        <div class="panel p3">Meu IP: 192.168.2.58</div>
      </footer>
      <div class="row-mark"><b class="tag">5.</b>${this.arrow(49, 40, "M0 9h24V0l25 20-25 20v-9H2q-2 0-2-2z")}</div>
      <pdf-window></pdf-window>
      <explorer-window></explorer-window>
      <div class="file-mark">${this.arrow(118, 71, "M0 36 61 0v16h55q2 0 2 2v36H61v17z")}<b class="tag">6.1.</b></div>`;
  }
}
